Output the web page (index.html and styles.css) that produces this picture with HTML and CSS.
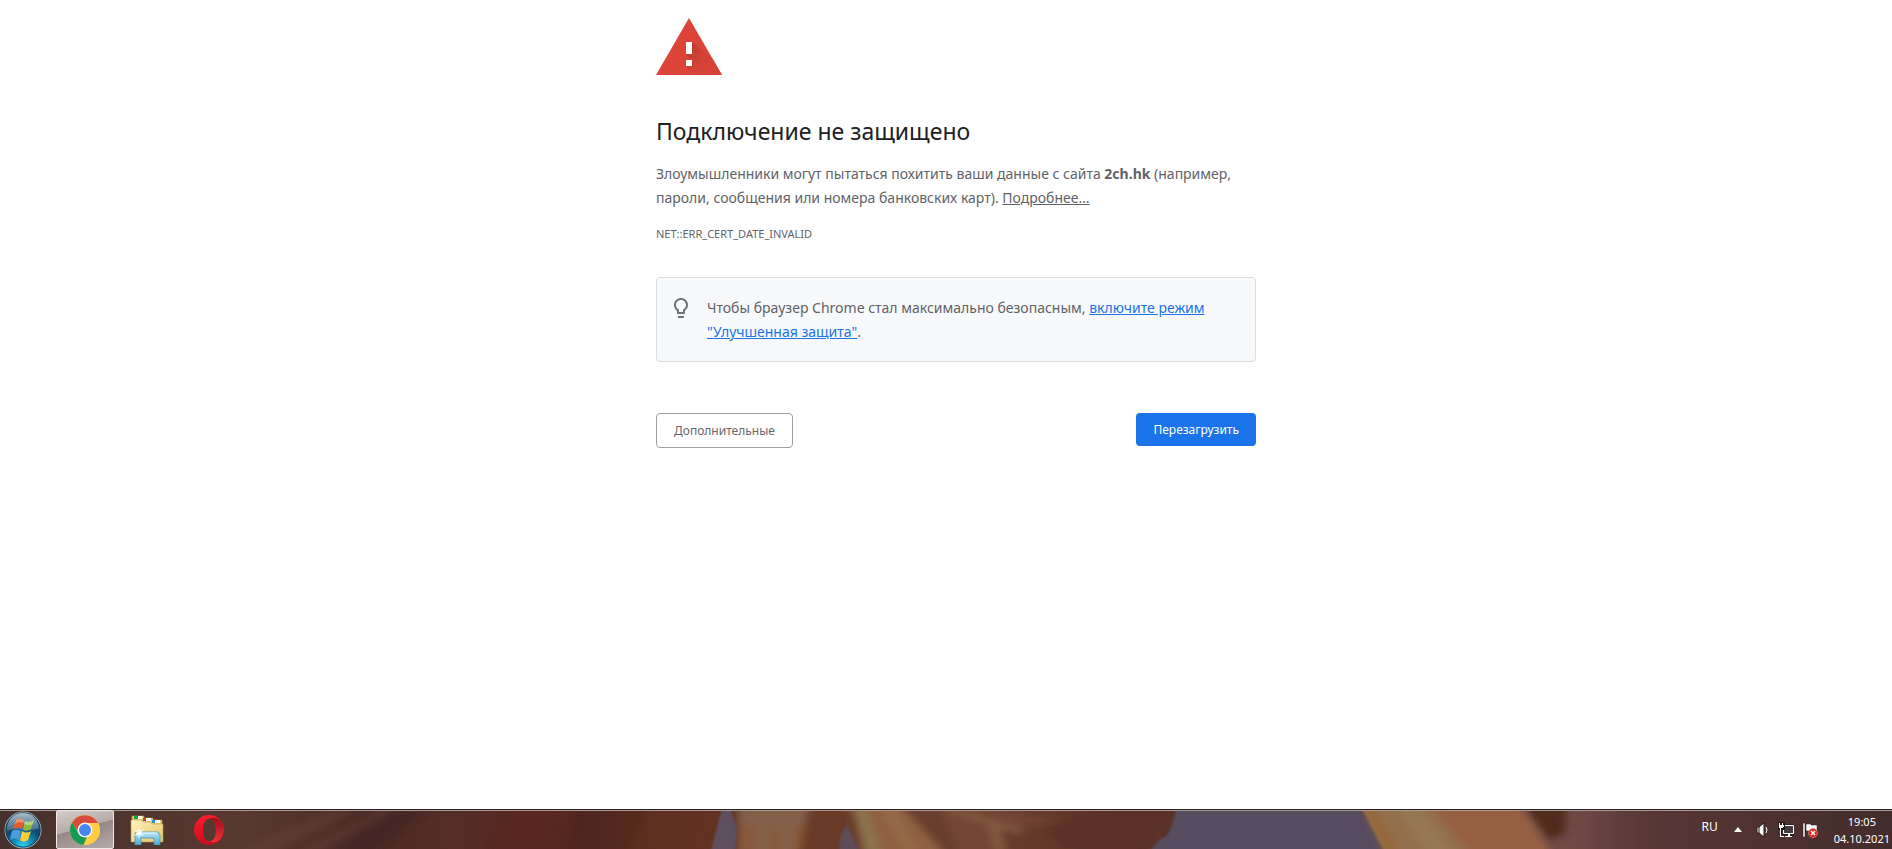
FILE: index.html
```
<!DOCTYPE html>
<html lang="ru">
<head>
    <meta charset="UTF-8">
    <meta name="viewport" content="width=device-width, initial-scale=1.0">
    <title>Ошибка нарушения конфиденциальности</title>
    <link rel="stylesheet" href="styles.css">
</head>
<body>
    <main class="page">
        <div class="interstitial">
            <svg class="warning-icon" viewBox="0 0 66 57" aria-hidden="true">
                <defs>
                    <linearGradient id="shade" gradientUnits="userSpaceOnUse" x1="34" y1="30" x2="52" y2="48">
                        <stop offset="0" stop-color="#bd3b30"/>
                        <stop offset="0.5" stop-color="#d04135"/>
                        <stop offset="1" stop-color="#d64337"/>
                    </linearGradient>
                </defs>
                <path fill="#db4437" d="M33 0l33 57H0z"/>
                <path fill="url(#shade)" d="M36 24l20.500 16.500L66 57H39l-9-9 6-2v-4l-6-6z"/>
                <path fill="#fff" d="M30 24h6v12h-6zM30 42h6v6h-6z"/>
            </svg>
            <h1>Подключение не защищено</h1>
            <p class="message">Злоумышленники могут пытаться похитить ваши данные с сайта <strong>2ch.hk</strong> (например, пароли, сообщения или номера банковских карт). <a href="#">Подробнее…</a></p>
            <div class="error-code">NET::ERR_CERT_DATE_INVALID</div>
            <div class="promo">
                <svg class="bulb-icon" viewBox="0 0 24 24" aria-hidden="true">
                    <path fill="#6e7175" d="M9 21c0 .5.400 1 1 1h4c.6 0 1-.5 1-1v-1H9v1zm3-19C8.100 2 5 5.100 5 9c0 2.400 1.200 4.500 3 5.700V17c0 .5.400 1 1 1h6c.6 0 1-.5 1-1v-2.300c1.800-1.300 3-3.400 3-5.700 0-3.900-3.100-7-7-7zm2.900 11.100l-.9.600V16h-4v-2.300l-.9-.6C7.800 12.200 7 10.600 7 9c0-2.800 2.200-5 5-5s5 2.200 5 5c0 1.600-.8 3.200-2.100 4.100z"/>
                </svg>
                <p>Чтобы браузер Chrome стал максимально безопасным, <a href="#">включите режим "Улучшенная защита"</a>.</p>
            </div>
            <div class="buttons">
                <button type="button" class="secondary">Дополнительные</button>
                <button type="button" class="primary">Перезагрузить</button>
            </div>
        </div>
    </main>

    <footer class="taskbar">
        <svg class="wallpaper" viewBox="0 0 1892 40" preserveAspectRatio="none" aria-hidden="true">
            <defs>
                <linearGradient id="base">
                    <stop offset="0" stop-color="#46302d"/>
                    <stop offset="0.13" stop-color="#58392f"/>
                    <stop offset="0.19" stop-color="#4b2a26"/>
                    <stop offset="0.24" stop-color="#552d27"/>
                    <stop offset="0.28" stop-color="#56281f"/>
                    <stop offset="0.31" stop-color="#4e261e"/>
                    <stop offset="0.37" stop-color="#613120"/>
                    <stop offset="0.48" stop-color="#6b402f"/>
                    <stop offset="0.6" stop-color="#5d3429"/>
                    <stop offset="0.64" stop-color="#5d3429"/>
                    <stop offset="0.72" stop-color="#564b5e"/>
                    <stop offset="0.83" stop-color="#704a47"/>
                    <stop offset="0.87" stop-color="#583735"/>
                    <stop offset="1" stop-color="#432c2c"/>
                </linearGradient>
                <filter id="soft" x="-10%" y="-50%" width="120%" height="200%"><feGaussianBlur stdDeviation="4"/></filter>
                <filter id="edge" x="-10%" y="-50%" width="120%" height="200%"><feGaussianBlur stdDeviation="1"/></filter>
            </defs>
            <rect width="1892" height="40" fill="url(#base)"/>
            <g filter="url(#soft)">
                <path fill="#63443a" d="M240 42L330 0h30L270 42zM300 42L380 0h12L318 42z" opacity=".5"/>
                <path fill="#402523" d="M335 42L395 0h32L375 42z" opacity=".7"/>
                <path fill="#5c291c" d="M490 42L515 0h60l-12 42z" opacity=".6"/>
                <path fill="#643220" d="M628 42L650 0h70l-15 42z" opacity=".5"/>
                <path fill="#846148" d="M738-6h72l-12 54h-60z"/>
                <path fill="#8d4e2d" d="M742 14h12v30h-12zM770 18h8v27h-8zM796 16h10l-4 30h-8z" opacity=".55"/>
                <path fill="#6b3a28" d="M818-4h27l-8 50h-30z"/>
                <path fill="#906142" d="M850-6h50l48 54h-78z"/>
                <path fill="#8b7850" d="M853-6l13 4 18 50h-20z" opacity=".8"/>
                <path fill="#977350" d="M878-6h14l28 54h-12z" opacity=".5"/>
                <path fill="#754934" d="M940-6h40l80 18-60 8 8 28h-50z" opacity=".8"/>
                <path fill="#8e6749" d="M930-4l38 6 56 18-4 6zM988 15h10l10 27h-14z" opacity=".6"/>
                <path fill="#572d22" d="M1040 20l60-24h80l-36 50h-70z" opacity=".5"/>
            </g>
            <g filter="url(#edge)">
                <path fill="#5d5060" d="M722-2h8l7 22-2 22h-24z"/>
                <path fill="#5d4c56" d="M847 14l12 28h-20q0-18 8-28z"/>
                <path fill="#574b5e" d="M1177-4h200v50h-228q4-12 18-20 6-10 10-30z"/>
                <path fill="#93704d" d="M1361-4h110l80 50h-165z"/>
            </g>
            <g filter="url(#soft)">
                <path fill="#966536" d="M1363-2h12l24 44h-14z" opacity=".8"/>
                <path fill="#975f43" d="M1430-6h90l34 54h-82z"/>
                <path fill="#977b57" d="M1395-6h20l40 54h-25z" opacity=".7"/>
                <path fill="#51291f" d="M1522-6h44v28l-16 10z"/>
            </g>
        </svg>
        <nav class="apps">
            <button type="button" class="app start" aria-label="Пуск">
                <svg viewBox="0 0 38 38" aria-hidden="true">
                    <defs>
                        <radialGradient id="orb" cx=".5" cy=".95" r=".9">
                            <stop offset="0" stop-color="#29d8fa"/>
                            <stop offset=".3" stop-color="#168ab8"/>
                            <stop offset=".6" stop-color="#12486c"/>
                            <stop offset="1" stop-color="#315875"/>
                        </radialGradient>
                        <linearGradient id="gloss" x2="0" y2="1">
                            <stop offset="0" stop-color="#b8cad4" stop-opacity=".9"/>
                            <stop offset="1" stop-color="#7095ad" stop-opacity=".45"/>
                        </linearGradient>
                    </defs>
                    <circle cx="19" cy="19" r="18" fill="url(#orb)" stroke="#a2b6c0" stroke-width="1"/>
                    <circle cx="19" cy="19" r="17" fill="none" stroke="#153d58"/>
                    <path fill="url(#gloss)" d="M3 17C4 7 11 2 19 2s15 5 16 15c-9 5-22-1-32 3z"/>
                    <path fill="#e9582b" d="M12 9c3-2 5-1 8 0l-2 9c-3-1-6-2-9 0z"/>
                    <path fill="#8cbd3a" d="M21 10c3 1 6 1 9-1l-3 9c-3 2-5 2-8 1z"/>
                    <path fill="#4b9ddb" d="M8 20c3-2 6-1 9 0l-2 9c-3-2-6-2-9 0z"/>
                    <path fill="#ffcd3b" d="M18 20c3 2 6 2 9 0l-3 9c-3 2-5 2-8 0z"/>
                    <path fill="#fff" opacity=".35" d="M12 9c3-2 5-1 8 0l-1 3c-3-1-5-1-8 1zM21 10c3 1 6 1 9-1l-1 4c-3 2-6 1-9 0z"/>
                </svg>
            </button>
            <button type="button" class="app active" aria-label="Google Chrome">
                <svg viewBox="0 0 30 30" aria-hidden="true">
                    <circle cx="15" cy="15" r="15" fill="#fdd04b"/>
                    <path fill="#d94b3d" d="M2 7.500A15 15 0 0 1 28 8H15a7 7 0 0 0-6.500 9z"/>
                    <path fill="#169b57" d="M2 7.500l6.900 11A7 7 0 0 0 17 21.700L13.500 30A15 15 0 0 1 2 7.500z"/>
                    <path fill="#ffcd43" d="M15 8h13a15 15 0 0 1-14.500 22L21 18.500A7 7 0 0 0 15 8z"/>
                    <circle cx="15" cy="15" r="7.500" fill="#f4f4f4"/>
                    <circle cx="15" cy="15" r="6" fill="#4688f1"/>
                </svg>
            </button>
            <button type="button" class="app explorer" aria-label="Проводник">
                <svg viewBox="0 0 34 30" aria-hidden="true">
                    <defs>
                        <linearGradient id="folder" x2="1" y2="1">
                            <stop offset="0" stop-color="#fff5bd"/>
                            <stop offset="1" stop-color="#e1c467"/>
                        </linearGradient>
                        <linearGradient id="stand" x2="0" y2="1">
                            <stop offset="0" stop-color="#bce9f7"/>
                            <stop offset="1" stop-color="#4aa9d4"/>
                        </linearGradient>
                    </defs>
                    <path fill="#e5cd7d" stroke="#a98e4a" stroke-width=".6" d="M2 5V1h12v2h9v2h9v7H2z"/>
                    <path fill="#fff" d="M4 1h8v3H4zM13 3h8v3h-8zM22 5h8v3h-8z"/>
                    <path fill="#16a32b" d="M4 1h4v3H4z"/>
                    <path fill="#d93a24" d="M13 3h3v3h-3z"/>
                    <path fill="#2196da" d="M22 5h3v3h-3z"/>
                    <path fill="url(#folder)" stroke="#b7994d" stroke-width=".6" d="M1 5h10l2 2h7l2 2h11v18H1z"/>
                    <path fill="url(#stand)" stroke="#4994b7" stroke-width=".8" d="M6 17h22l2 3v10h-6v-7H11v7H5V20z"/>
                    <path fill="none" stroke="#effcff" d="M7 18h20"/>
                    <path fill="#fff" d="M9 12l1 4 4-2-3 4 3 3-4-1-1 4-1-4-4 1 3-3-3-4 4 2z" opacity=".85"/>
                </svg>
            </button>
            <button type="button" class="app" aria-label="Opera">
                <svg viewBox="0 0 30 30" aria-hidden="true">
                    <defs>
                        <linearGradient id="opera" x2="0" y2="1">
                            <stop offset="0" stop-color="#ff1b2d"/>
                            <stop offset="1" stop-color="#c90d20"/>
                        </linearGradient>
                        <linearGradient id="operaSide" x2="0" y2="1">
                            <stop offset="0" stop-color="#a00d19"/>
                            <stop offset="1" stop-color="#f0343e"/>
                        </linearGradient>
                    </defs>
                    <path fill="url(#opera)" fill-rule="evenodd" d="M15 0a15 15 0 0 1 0 30a15 15 0 0 1 0-30zM15.500 3.500c-4 0-6.500 5-6.500 11.500s2.500 11.500 6.500 11.500S22 21.500 22 15 19.500 3.500 15.500 3.500z"/>
                    <path fill="url(#operaSide)" d="M15.500 3.500c3-1.500 7-.5 9.700 1.200a15 15 0 0 1 0 20.600c-2.700 1.700-6.700 2.700-9.700 1.200 4 0 6.500-5 6.500-11.500S19.500 3.500 15.500 3.500z"/>
                </svg>
            </button>
        </nav>
        <div class="tray">
            <span class="lang">RU</span>
            <svg class="arrow" viewBox="0 0 8 5" aria-hidden="true"><path fill="#fff" d="M0 5l4-5 4 5z"/></svg>
            <svg class="tray-icon" viewBox="0 0 16 16" aria-hidden="true">
                <path fill="#fff" stroke="#231819" d="M3 5h2l5-4v14l-5-4H3z"/>
                <path fill="none" stroke="#231819" d="M5 5v6"/>
                <path fill="none" stroke="#fff" d="M12 5q2 3 0 6"/>
            </svg>
            <svg class="tray-icon" viewBox="0 0 16 16" aria-hidden="true">
                <path fill="#3e3436" stroke="#211719" stroke-width="3" d="M6 4h9v8H6z"/>
                <path fill="#443b3e" stroke="#fff" d="M5.500 3.500h10v8h-10z"/>
                <path fill="#fff" d="M10 12h2v2h2v1H7v-1h3z"/>
                <path fill="#211719" d="M0 0h7v8H4v4H2V8H0z"/>
                <path fill="#fff" d="M1 1h1v2h2V1h1v2h1v2H5v1H3v8h3v1H2V6H1V3h0z"/>
            </svg>
            <svg class="tray-icon" viewBox="0 0 16 16" aria-hidden="true">
                <path fill="#fff" stroke="#231819" stroke-width=".5" d="M1 1h2v14H1zM4 2h5v1h6v7H9V9H4z"/>
                <circle cx="11" cy="11" r="4.500" fill="#dc251a" stroke="#ed8078" stroke-width=".7"/>
                <path stroke="#fff" stroke-width="1.500" d="M9 9l4 4m0-4l-4 4"/>
            </svg>
            <time class="clock" datetime="2021-10-04T19:05"><span>19:05</span><span>04.10.2021</span></time>
        </div>
    </footer>
</body>
</html>
```
FILE: styles.css
```
:root {
    --text-color: #5f6368;
    --heading-color: #202124;
    --link-color: #1a73e8;
    --border-color: #dadce0;
    --promo-bg: #f8f9fa;
}
* {
    box-sizing: border-box;
}
body {
    margin: 0;
    min-height: 100vh;
    display: flex;
    flex-direction: column;
    background: #fff;
    color: var(--text-color);
    font-family: 'Segoe UI', 'Noto Sans', 'Open Sans', sans-serif;
    font-size: 14px;
    line-height: 24px;
}
.page {
    flex: 1;
    padding: 18px 0 24px 20px;
}
.interstitial {
    width: 100%;
    max-width: 600px;
    margin: 0 auto;
}
.warning-icon {
    display: block;
    width: 66px;
    height: 57px;
    margin-bottom: 40px;
}
h1 {
    margin: 0 0 15px;
    color: var(--heading-color);
    font-size: 23px;
    font-weight: 400;
    line-height: 32px;
}
p {
    margin: 0;
}
.message a {
    color: inherit;
}
.error-code {
    margin-top: 12px;
    font-size: 11px;
}
.promo {
    display: flex;
    gap: 14px;
    margin-top: 31px;
    padding: 18px 16px 17px;
    border: 1px solid var(--border-color);
    border-radius: 4px;
    background: var(--promo-bg);
}
.promo a {
    color: var(--link-color);
}
.bulb-icon {
    flex: none;
    width: 24px;
    height: 24px;
    margin-left: -4px;
}
.buttons {
    display: flex;
    justify-content: space-between;
    align-items: flex-start;
    margin-top: 51px;
}
.buttons button {
    padding: 8px 17px;
    border: 0;
    border-radius: 4px;
    font-family: inherit;
    font-size: 12px;
    line-height: 17px;
    cursor: pointer;
}
.buttons .primary {
    background: var(--link-color);
    color: #fff;
}
.buttons .secondary {
    border: 1px solid #9aa0a6;
    background: #fff;
    color: #696969;
}
.taskbar {
    position: relative;
    display: flex;
    justify-content: space-between;
    height: 40px;
    overflow: hidden;
    border-top: 1px solid #27201f;
    box-shadow: inset 0 1px 0 #a99997;
    color: #fff;
}
.wallpaper {
    position: absolute;
    inset: 0;
    width: 100%;
    height: 100%;
    z-index: -1;
}
.apps {
    display: flex;
    gap: 4px;
}
.app {
    display: flex;
    align-items: center;
    justify-content: center;
    width: 58px;
    padding: 0;
    border: 0;
    background: none;
}
.app svg {
    width: 30px;
    height: 30px;
}
.app.start {
    width: 46px;
    margin-right: 6px;
}
.app.start svg {
    width: 38px;
    height: 38px;
}
.app.explorer svg {
    width: 34px;
}
.app.active {
    border: 1px solid #f0e9e7;
    border-radius: 2px;
    background: linear-gradient(165deg, #d7cecb 0%, #b4aaa8 45%, #958786 46%, #b5abaa 100%);
}
.tray {
    display: flex;
    align-items: center;
    gap: 8px;
    padding-right: 2px;
}
.lang {
    margin: 0 8px 6px 0;
    font-size: 12px;
}
.arrow {
    width: 8px;
    height: 5px;
    margin-right: 4px;
}
.tray-icon {
    width: 16px;
    height: 16px;
}
.clock {
    display: flex;
    flex-direction: column;
    align-items: center;
    margin-left: 8px;
    font-size: 11px;
    line-height: 17px;
}
```
